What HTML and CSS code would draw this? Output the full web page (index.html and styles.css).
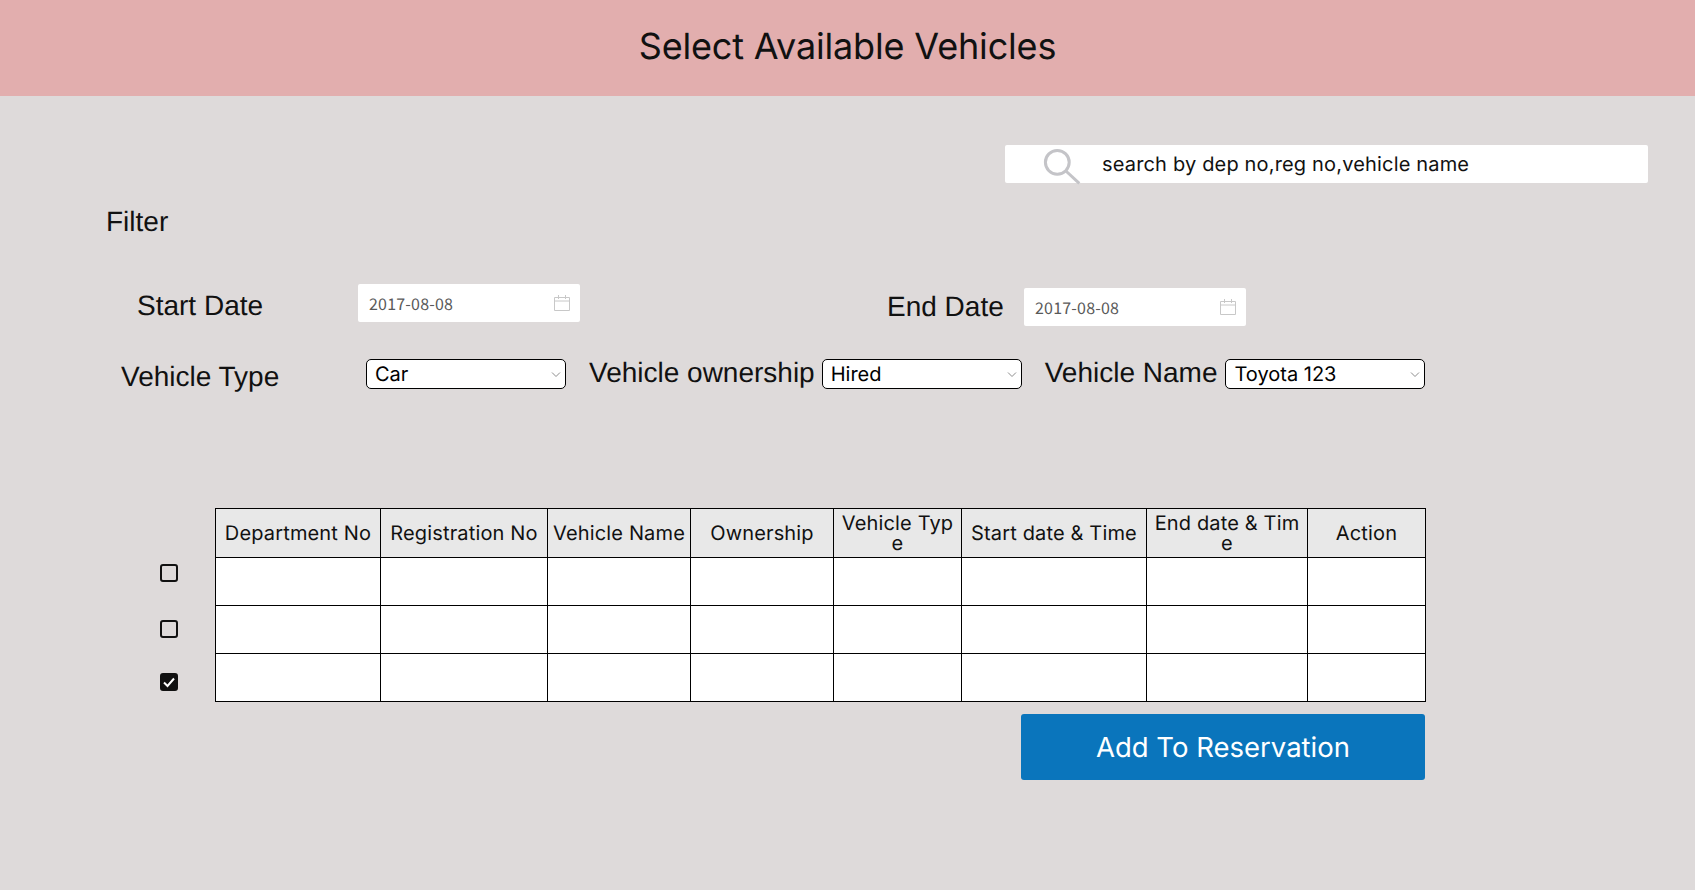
FILE: index.html
```html
<!DOCTYPE html>
<html lang="en">
<head>
    <meta charset="UTF-8">
    <meta name="viewport" content="width=device-width, initial-scale=1.0">
    <title>Select Available Vehicles</title>
    <link rel="stylesheet" href="styles.css">
</head>
<body>

<header class="page-header">
    <h1>Select Available Vehicles</h1>
</header>

<main class="content">
    <div class="search-row">
        <div class="search-box">
            <svg class="search-icon" width="38" height="38" viewBox="0 0 38 38" fill="none" stroke="#c4c4c8" stroke-width="3">
                <circle cx="13.3" cy="13.3" r="11.9"/>
                <path d="M21.9 22L35.3 34.3"/>
            </svg>
            <input class="search-input" type="text" placeholder="search by dep no,reg no,vehicle name">
        </div>
    </div>

    <div class="filter-title">Filter</div>

    <div class="date-row">
        <label class="label start-label">Start Date</label>
        <div class="date-box start-box">
            <span>2017-08-08</span>
            <svg width="16" height="16" viewBox="0 0 16 16" fill="none" stroke="#c8c8c8" stroke-width="1">
                <path d="M.5 2.5h15v13H.5zM.5 6h15M4.5 0v4M11.5 0v4"/>
            </svg>
        </div>
        <label class="label end-label">End Date</label>
        <div class="date-box end-box">
            <span>2017-08-08</span>
            <svg width="16" height="16" viewBox="0 0 16 16" fill="none" stroke="#c8c8c8" stroke-width="1">
                <path d="M.5 2.5h15v13H.5zM.5 6h15M4.5 0v4M11.5 0v4"/>
            </svg>
        </div>
    </div>

    <div class="select-row">
        <label class="label type-label">Vehicle Type</label>
        <div class="picker">
            <select><option>Car</option></select>
            <svg class="chevron" width="10" height="6" viewBox="0 0 10 6" fill="none" stroke="#8c8c8c" stroke-width="1"><path d="M1 .5l4 4 4-4"/></svg>
        </div>
        <label class="label owner-label">Vehicle ownership</label>
        <div class="picker">
            <select><option>Hired</option></select>
            <svg class="chevron" width="10" height="6" viewBox="0 0 10 6" fill="none" stroke="#8c8c8c" stroke-width="1"><path d="M1 .5l4 4 4-4"/></svg>
        </div>
        <label class="label name-label">Vehicle Name</label>
        <div class="picker">
            <select><option>Toyota 123</option></select>
            <svg class="chevron" width="10" height="6" viewBox="0 0 10 6" fill="none" stroke="#8c8c8c" stroke-width="1"><path d="M1 .5l4 4 4-4"/></svg>
        </div>
    </div>

    <div class="table-row">
        <div class="checks">
            <span class="check"></span>
            <span class="check"></span>
            <span class="check checked">
                <svg width="14" height="14" viewBox="0 0 14 14" fill="none" stroke="#fff" stroke-width="2">
                    <path d="M2 7.5l3.5 3.5L12 3.5"/>
                </svg>
            </span>
        </div>
        <table class="vehicles">
            <colgroup>
                <col class="c1"><col class="c2"><col class="c3"><col class="c4">
                <col class="c5"><col class="c6"><col class="c7"><col class="c8">
            </colgroup>
            <thead>
                <tr>
                    <th>Department No</th>
                    <th>Registration No</th>
                    <th>Vehicle Name</th>
                    <th>Ownership</th>
                    <th>Vehicle Type</th>
                    <th>Start date &amp; Time</th>
                    <th>End date &amp; Time</th>
                    <th>Action</th>
                </tr>
            </thead>
            <tbody>
                <tr><td></td><td></td><td></td><td></td><td></td><td></td><td></td><td></td></tr>
                <tr><td></td><td></td><td></td><td></td><td></td><td></td><td></td><td></td></tr>
                <tr><td></td><td></td><td></td><td></td><td></td><td></td><td></td><td></td></tr>
            </tbody>
        </table>
    </div>

    <div class="action-row">
        <button class="add-btn">Add To Reservation</button>
    </div>
</main>

</body>
</html>
```

FILE: styles.css
```css
* {
    box-sizing: border-box;
}
body {
    margin: 0;
    min-height: 100vh;
    background-color: #dedada;
    color: #111;
    font-family: Inter, sans-serif;
    text-rendering: geometricPrecision;
}
.page-header {
    height: 96px;
    padding-bottom: 4px;
    background-color: #e2aeae;
    display: flex;
    justify-content: center;
    align-items: center;
}
.page-header h1 {
    margin: 0;
    font-size: 36px;
    font-weight: 400;
    letter-spacing: -0.17px;
}
.content {
    padding-top: 49px;
}
.search-row {
    display: flex;
    justify-content: flex-end;
    padding-right: 47px;
}
.search-box {
    width: 643px;
    height: 38px;
    background-color: #fff;
    border-radius: 2px;
    display: flex;
    padding-left: 39px;
    padding-top: 4px;
}
.search-icon {
    flex: none;
    overflow: visible;
}
.search-input {
    flex: 1;
    border: none;
    outline: none;
    background: transparent;
    margin-left: 20px;
    padding: 0 0 4px 0;
    font-family: Inter, sans-serif;
    font-size: 20px;
    letter-spacing: 0.17px;
    text-rendering: geometricPrecision;
}
.search-input::placeholder {
    color: #111;
    opacity: 1;
}
.filter-title {
    font-family: "Liberation Sans", Arial, sans-serif;
    font-size: 28px;
    line-height: 32px;
    margin: 23px 0 0 106px;
}
.label {
    font-family: "Liberation Sans", Arial, sans-serif;
    font-size: 28px;
    line-height: 32px;
    flex: none;
}
.date-row {
    display: flex;
    align-items: flex-start;
    margin-top: 46px;
    height: 50px;
}
.start-label {
    margin: 6px 0 0 137px;
    width: 221px;
}
.end-label {
    margin: 7px 19px 0 307px;
    width: 118px;
}
.date-box {
    width: 222px;
    height: 38px;
    background-color: #fff;
    border-radius: 2px;
    display: flex;
    align-items: center;
    justify-content: space-between;
    padding: 0 10px 0 11px;
    font-family: "Noto Sans CJK JP", "Noto Sans", sans-serif;
    font-size: 16px;
    letter-spacing: 0.2px;
    color: #595959;
    flex: none;
}
.end-box {
    margin-top: 4px;
}
.select-row {
    display: flex;
    align-items: flex-start;
    margin-top: 25px;
}
.type-label {
    margin: 2px 0 0 121px;
    width: 245px;
}
.owner-label {
    margin: -2px 7px 0 23px;
}
.name-label {
    margin: -2px 8px 0 23px;
}
.picker {
    width: 200px;
    height: 30px;
    flex: none;
    position: relative;
}
.picker select {
    appearance: none;
    width: 100%;
    height: 100%;
    background-color: #fff;
    border: 1px solid #000;
    border-radius: 5px;
    padding: 0 8px;
    font-family: Inter, sans-serif;
    font-size: 20px;
    color: #000;
    text-rendering: geometricPrecision;
}
.chevron {
    position: absolute;
    right: 5px;
    top: 13px;
}
.table-row {
    display: flex;
    align-items: flex-start;
    margin-top: 115px;
}
.checks {
    width: 215px;
    padding: 56px 0 0 160px;
    display: flex;
    flex-direction: column;
    gap: 38px;
}
.check {
    width: 18px;
    height: 18px;
    border: 2px solid #111;
    border-radius: 3px;
    display: flex;
    align-items: center;
    justify-content: center;
}
.check.checked {
    background-color: #111;
    margin-top: -3px;
}
.vehicles {
    width: 1210px;
    border-collapse: collapse;
    table-layout: fixed;
    font-size: 20px;
    letter-spacing: 0.15px;
}
.c1 { width: 165px; }
.c2 { width: 167px; }
.c3 { width: 143px; }
.c4 { width: 143px; }
.c5 { width: 128px; }
.c6 { width: 185px; }
.c7 { width: 161px; }
.c8 { width: 118px; }
.vehicles th, .vehicles td {
    border: 1px solid #000;
    padding: 0 5px;
    height: 48px;
}
.vehicles th {
    height: 49px;
    background-color: #e8e8e8;
    font-weight: 400;
    line-height: 20px;
    word-break: break-all;
}
.vehicles td {
    background-color: #fff;
}
.action-row {
    display: flex;
    justify-content: flex-end;
    padding-right: 270px;
    margin-top: 12px;
}
.add-btn {
    width: 404px;
    height: 66px;
    background-color: #0a75bc;
    color: #fff;
    border: none;
    border-radius: 3px;
    font-family: Inter, sans-serif;
    font-size: 27.5px;
    text-rendering: geometricPrecision;
}
```
